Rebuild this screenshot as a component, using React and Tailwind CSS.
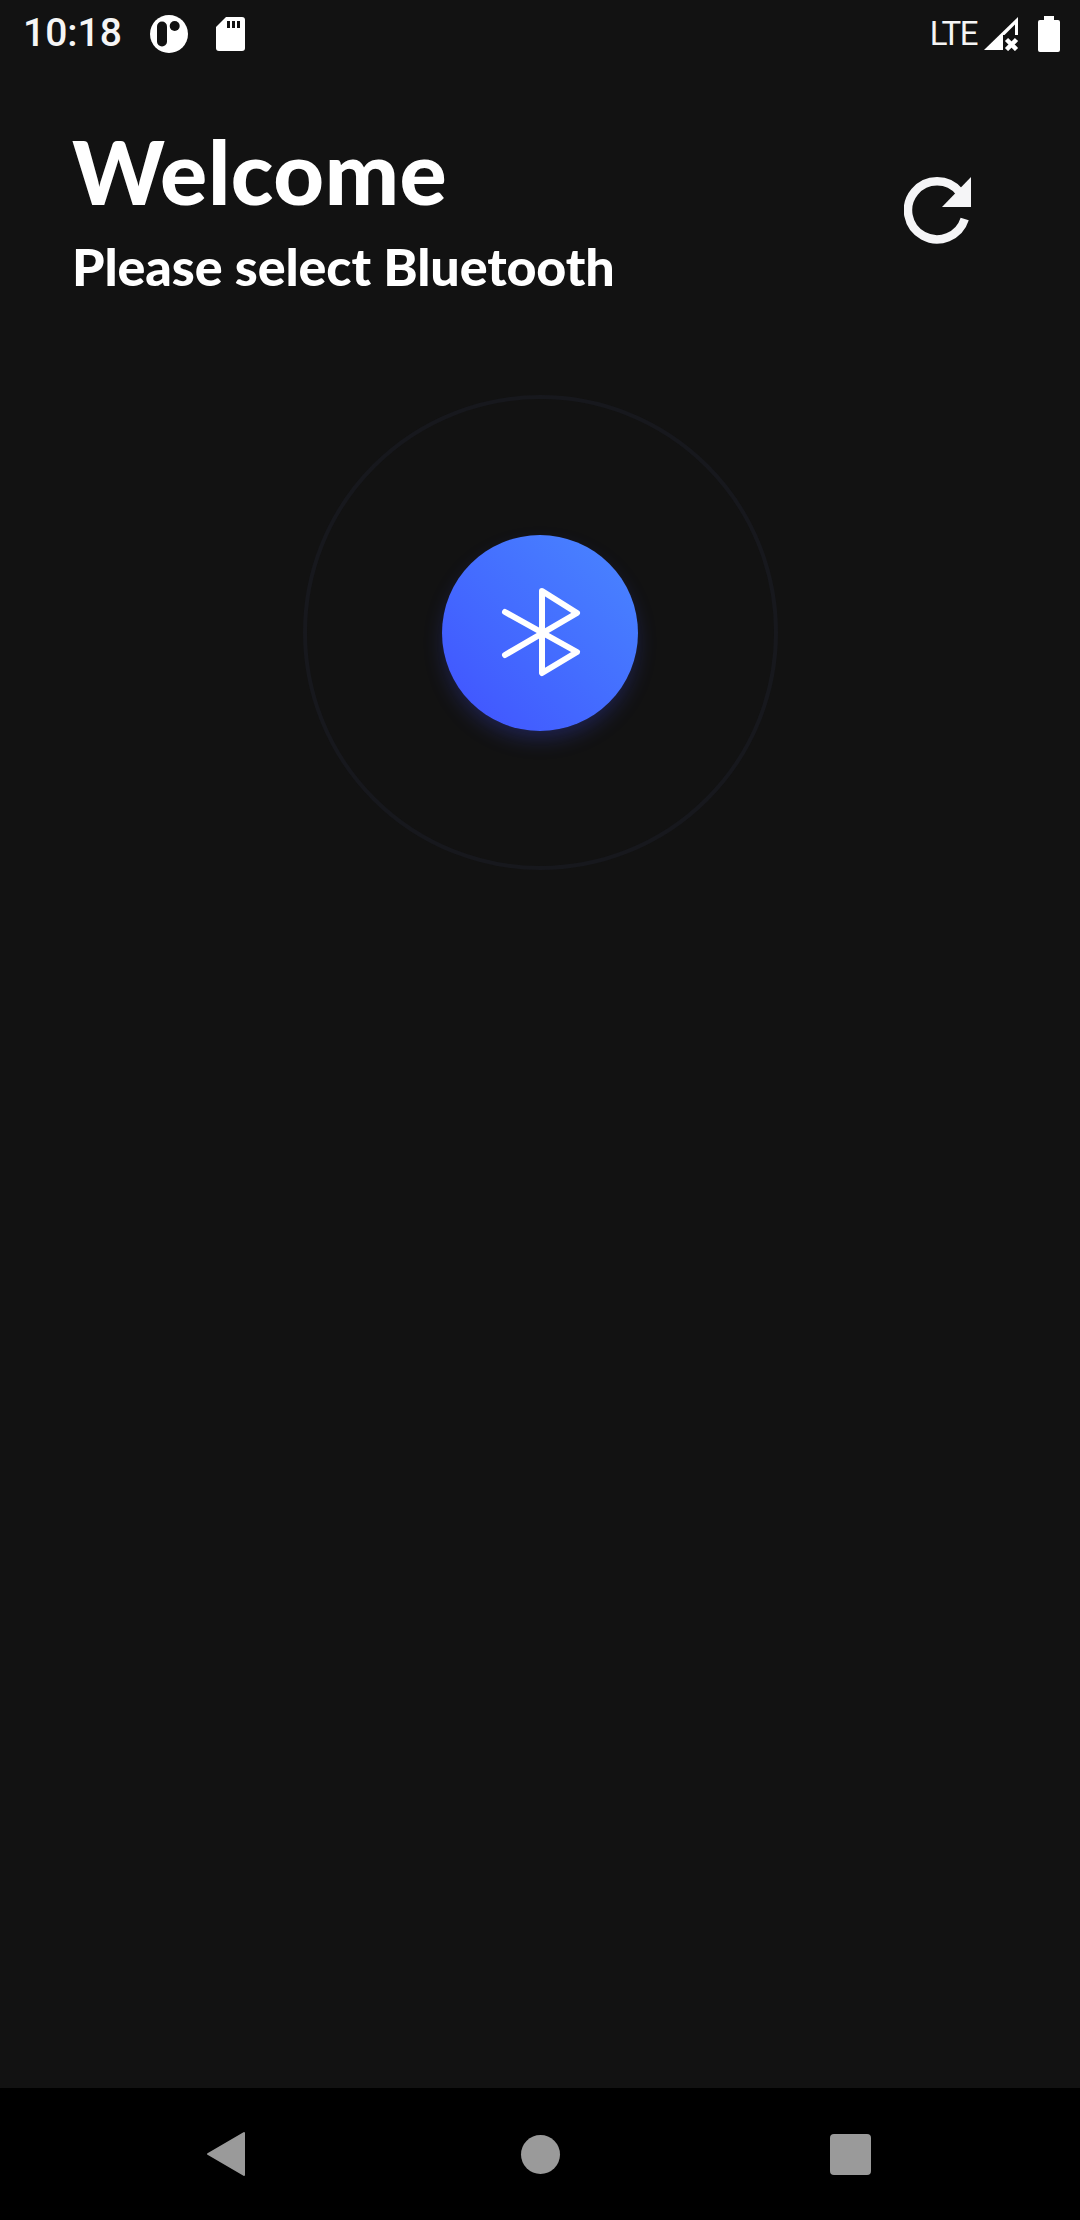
export default function App() {
  return (
    <div className="w-[1080px] h-[2220px] bg-[#121212] flex flex-col overflow-hidden text-white" style={{ fontFamily: "Lato, 'Liberation Sans', sans-serif" }}>
      <div className="h-[66px] flex items-center justify-between pl-[23px] pr-[20px] pt-[1px]">
        <div className="flex items-center">
          <span className="text-[39px] leading-none font-medium text-[#f5f5f5] [font-family:Roboto,sans-serif] w-[127px]">10:18</span>
          <svg width="38" height="38" viewBox="0 0 38 38" className="mr-[28px]">
            <circle cx="19" cy="19" r="19" fill="#fff" />
            <rect x="7" y="6.5" width="10" height="25" rx="5" fill="#121212" />
            <circle cx="24.7" cy="11" r="5" fill="#121212" />
          </svg>
          <svg width="29" height="34" viewBox="0 0 29 34">
            <path d="M10 0H26a3 3 0 0 1 3 3V31a3 3 0 0 1-3 3H3a3 3 0 0 1-3-3V10Z" fill="#fff" />
            <rect x="11" y="4" width="3" height="7" fill="#121212" />
            <rect x="16" y="4" width="3" height="7" fill="#121212" />
            <rect x="21" y="4" width="3" height="7" fill="#121212" />
          </svg>
        </div>
        <div className="flex items-center">
          <span className="text-[33px] leading-none text-[#f5f5f5] [font-family:Roboto,sans-serif] tracking-[-1.5px] mr-[7px]">LTE</span>
          <svg width="35" height="35" viewBox="0 0 35 35" className="mr-[19px]">
            <path d="M0 34L34 1V34Z" fill="#fff" />
            <path d="M31 8.5V19H20.5Z" fill="#121212" />
            <rect x="19" y="19" width="16" height="16" fill="#121212" />
            <path d="M22.5 23.5L32.5 33.5M32.5 23.5L22.5 33.5" stroke="#fff" strokeWidth="4.5" />
          </svg>
          <svg width="22" height="36" viewBox="0 0 22 36">
            <path d="M6 0H16V4H20a2 2 0 0 1 2 2V34a2 2 0 0 1-2 2H2a2 2 0 0 1-2-2V6a2 2 0 0 1 2-2H6Z" fill="#fff" />
          </svg>
        </div>
      </div>

      <div className="flex justify-between pl-[72px] pr-[106px] pt-[55px]">
        <div>
          <h1 className="text-[88px] leading-[100px] font-black tracking-[0.6px]">Welcome</h1>
          <p className="text-[52px] leading-[60px] font-black mt-[15px] tracking-[-0.1px]">Please select Bluetooth</p>
        </div>
        <svg width="70" height="70" viewBox="0 0 70 70" className="mt-[55px]">
          <path d="M60.7 43A29 29 0 1 1 55.5 16" fill="none" stroke="#f5f5f7" strokeWidth="8.5" />
          <path d="M67 1V31H38Z" fill="#f5f5f7" />
        </svg>
      </div>

      <div className="flex justify-center mt-[99px]">
        <div className="w-[475px] h-[475px] rounded-full border-[4px] border-[#17181d] flex items-center justify-center">
          <div className="w-[196px] h-[196px] rounded-full bg-gradient-to-bl from-[#4a86ff] to-[#4150ff] shadow-[0_10px_22px_-4px_rgba(65,80,255,0.3)] flex items-center justify-center">
            <svg width="84" height="96" viewBox="0 0 84 96" className="ml-[1px]">
              <path d="M6 27L78 67L43 88V6L78 28L6 70" fill="none" stroke="#fff" strokeWidth="6" strokeLinecap="round" strokeLinejoin="round" />
            </svg>
          </div>
        </div>
      </div>

      <div className="mt-auto h-[132px] bg-black flex items-center justify-between pl-[206px] pr-[209px]">
        <svg width="40" height="46" viewBox="0 0 40 46">
          <path d="M38 2V44L2 23Z" fill="#9a9a9a" stroke="#9a9a9a" strokeWidth="2" strokeLinejoin="round" />
        </svg>
        <div className="w-[39px] h-[39px] ml-[5px] rounded-full bg-[#9a9a9a]" />
        <div className="w-[41px] h-[41px] rounded-[4px] bg-[#9a9a9a]" />
      </div>
    </div>
  );
}
